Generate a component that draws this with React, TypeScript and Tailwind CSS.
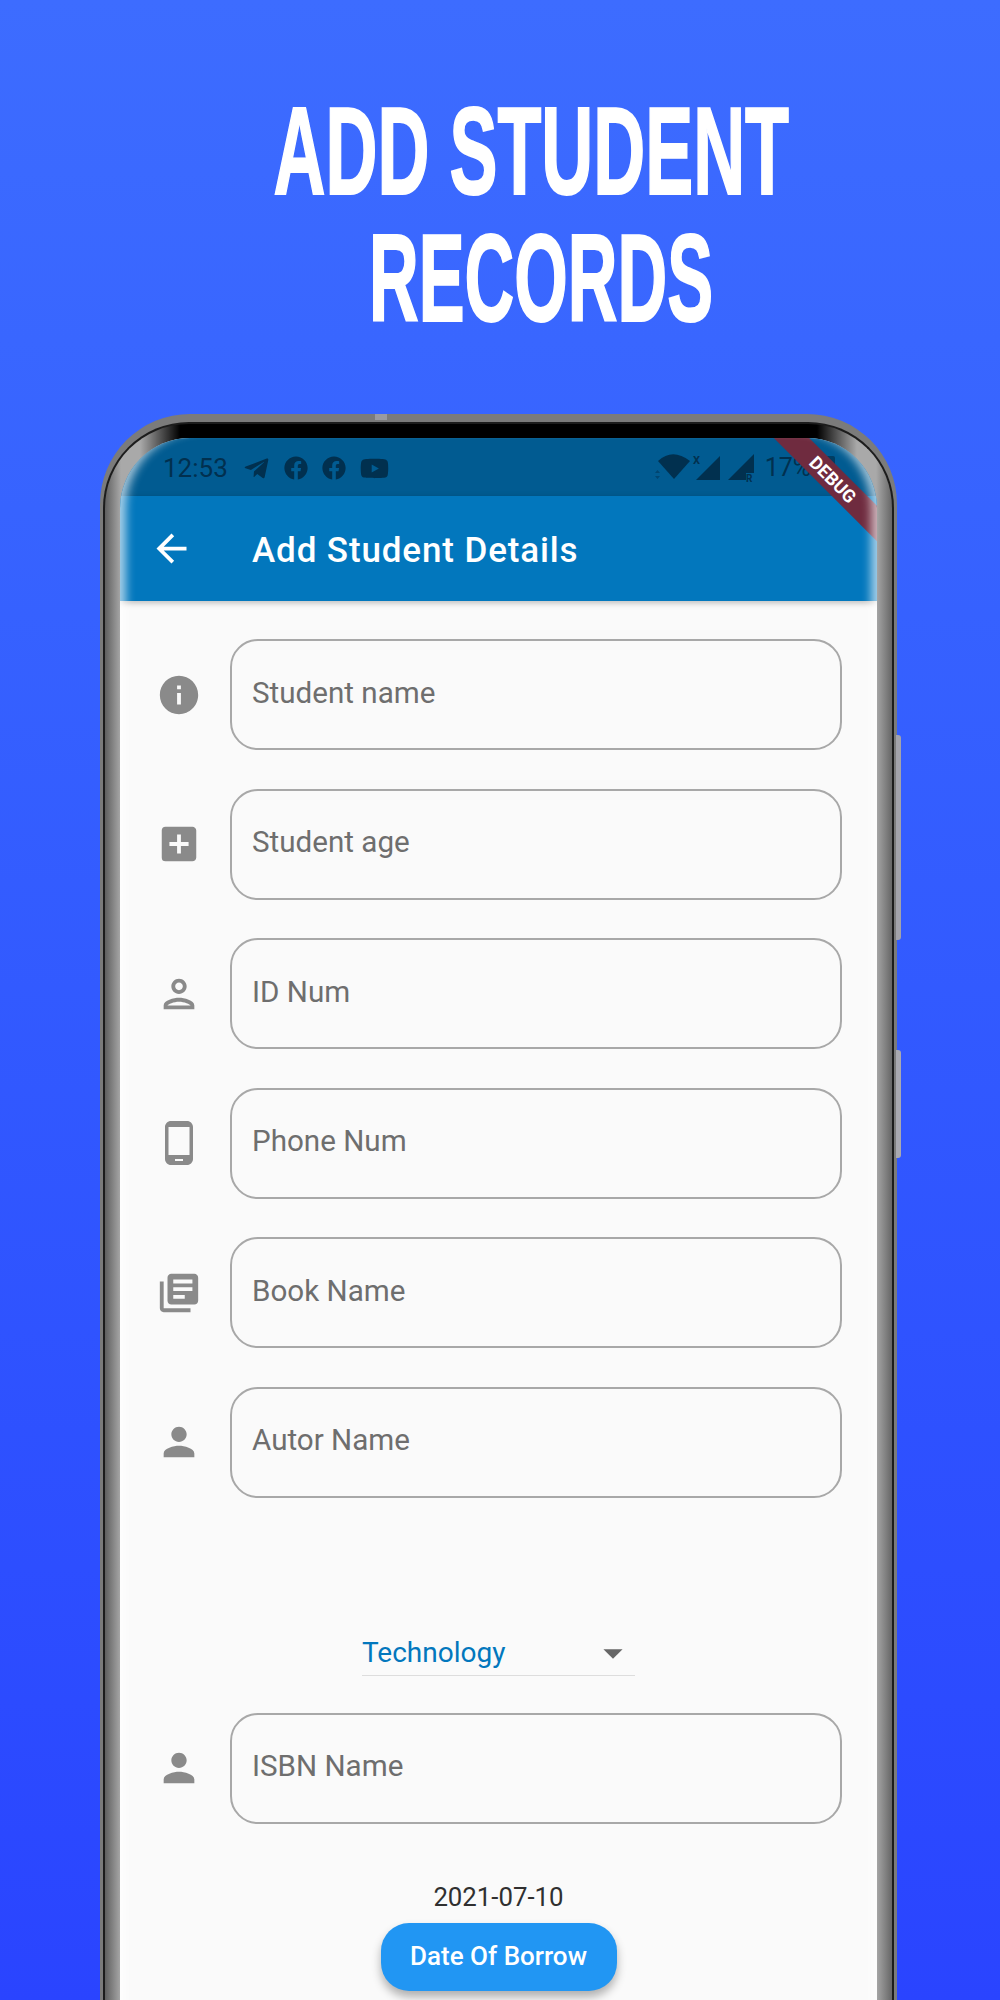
import type { ReactNode } from 'react';
import { FaFacebook, FaTelegramPlane, FaYoutube } from 'react-icons/fa';
import {
  MdAddBox,
  MdArrowBack,
  MdArrowDropDown,
  MdInfo,
  MdLibraryBooks,
  MdOutlinePerson,
  MdPerson,
  MdPhoneAndroid,
} from 'react-icons/md';

function Field({ icon, label }: { icon: ReactNode; label: string }) {
  return (
    <div className="flex items-center gap-[27px] pl-[34px] pr-[35px]">
      <div className="flex w-[49px] justify-center text-[#8a8a8a]">{icon}</div>
      <div className="flex h-[111px] flex-1 items-center rounded-[28px] border-2 border-[#a8a8a8] pb-[3px] pl-[20px] text-[29.6px] text-[#6e6e6e]">
        {label}
      </div>
    </div>
  );
}

function StatusBar() {
  return (
    <div className="flex h-[58px] items-center bg-[#015b91] pl-[43px] pt-[2px] text-[#01304f]">
      <span className="text-[26px]">12:53</span>
      <div className="ml-[15px] flex items-center gap-[14px]">
        <FaTelegramPlane size={27} />
        <FaFacebook size={24} />
        <FaFacebook size={24} />
        <FaYoutube size={29} />
      </div>
      <svg width="100" height="30" viewBox="0 0 100 30" className="ml-[265px]" fill="currentColor">
        <path d="M4 8C14 -1 24 -1 36 8L20 26Z" />
        <path d="M1 20L3.500 17L6 20ZM1 23L3.500 26L6 23Z" opacity="0.5" />
        <text x="39" y="11" fontSize="11" fontWeight="700" fontFamily="Roboto, sans-serif">X</text>
        <path d="M42 27L66 3V27Z" />
        <path d="M74 27L100 1V20H92V27Z" />
        <text x="92" y="29" fontSize="10" fontWeight="700" fontFamily="Roboto, sans-serif">R</text>
      </svg>
      <span className="ml-[11px] text-[25px]">17%</span>
      <div className="ml-[14px] h-[25px] w-[10px] rounded-[2px] bg-[#01304f] opacity-70" />
    </div>
  );
}

export default function App() {
  return (
    <div className="h-[2000px] overflow-hidden bg-gradient-to-b from-[#3d6cff] to-[#2a44ff] font-['Roboto',sans-serif]">
      <h1 className="flex flex-col items-center pl-[62px] pt-[88px] font-['Liberation_Sans',sans-serif] text-[124px] leading-[127px] font-bold text-white [-webkit-text-stroke:2px_white]">
        <span className="scale-x-[0.58]">ADD STUDENT</span>
        <span className="ml-[20px] scale-x-[0.555]">RECORDS</span>
      </h1>

      <div className="relative mt-[72px] ml-[100px] h-[1700px] w-[797px] rounded-t-[90px] bg-[#7b7b7b] px-[3px] pt-[8px]">
        <div className="absolute top-0 left-[275px] h-[6px] w-[12px] bg-[#9a9a9f]" />
        <div className="absolute top-[321px] -right-[4px] h-[205px] w-[5px] rounded-r-[3px] bg-[#a3a3aa]" />
        <div className="absolute top-[636px] -right-[4px] h-[108px] w-[5px] rounded-r-[3px] bg-[#a9a9b0]" />

        <div className="h-full rounded-t-[86px] border-x-2 border-t-2 border-[#1c1c1c] px-[15px] pt-[14px] [background:linear-gradient(90deg,transparent_35px,#000_75px,#000_calc(100%-75px),transparent_calc(100%-35px))_0_0/100%_50px_no-repeat,linear-gradient(90deg,#5f5f5f_0,#a9a9a9_16px,#a9a9a9_calc(100%-16px),#666666_100%)]">
          <div className="relative h-full overflow-hidden rounded-t-[70px] bg-[#fafafa]">
            <StatusBar />

            <header className="flex h-[105px] items-center bg-[#0277bd] pl-[29px] text-white shadow-[0_2px_6px_rgba(0,0,0,0.25)]">
              <MdArrowBack size={45} />
              <span className="ml-[58px] pt-[5px] text-[35px] font-medium tracking-[0.87px]">Add Student Details</span>
            </header>

            <div className="absolute top-[29px] left-[613px] flex h-[25px] w-[200px] rotate-45 items-center justify-center bg-[#6f2b3f] text-[18px] font-bold text-white">
              DEBUG
            </div>
            <div className="pointer-events-none absolute inset-0 rounded-t-[70px] shadow-[inset_14px_0_10px_-8px_rgba(255,255,255,0.65),inset_-14px_0_10px_-8px_rgba(255,255,255,0.65)]" />

            <div className="flex flex-col gap-[38.5px] pt-[38px]">
              <Field icon={<MdInfo size={46} />} label="Student name" />
              <Field icon={<MdAddBox size={46} />} label="Student age" />
              <Field icon={<MdOutlinePerson size={46} />} label="ID Num" />
              <Field icon={<MdPhoneAndroid size={48} />} label="Phone Num" />
              <Field icon={<MdLibraryBooks size={46} />} label="Book Name" />
              <Field icon={<MdPerson size={46} />} label="Autor Name" />
            </div>

            <div className="mx-auto mt-[117px] flex h-[61px] w-[273px] items-center justify-between border-b border-[#dddddd] pt-[16px] text-[28px] text-[#0277bd]">
              <span>Technology</span>
              <MdArrowDropDown size={46} className="-mr-[1px] text-[#666666]" />
            </div>

            <div className="mt-[37px]">
              <Field icon={<MdPerson size={46} />} label="ISBN Name" />
            </div>

            <div className="mt-[56px] flex flex-col items-center">
              <span className="text-[25.800px] leading-[34px] text-[#303030]">2021-07-10</span>
              <div className="mt-[9px] flex h-[68px] w-[236px] items-center justify-center rounded-[28px] bg-[#2196f3] text-[26px] font-medium text-white shadow-[0_6px_10px_rgba(0,0,0,0.3)]">
                Date Of Borrow
              </div>
            </div>
          </div>
        </div>
      </div>
    </div>
  );
}
